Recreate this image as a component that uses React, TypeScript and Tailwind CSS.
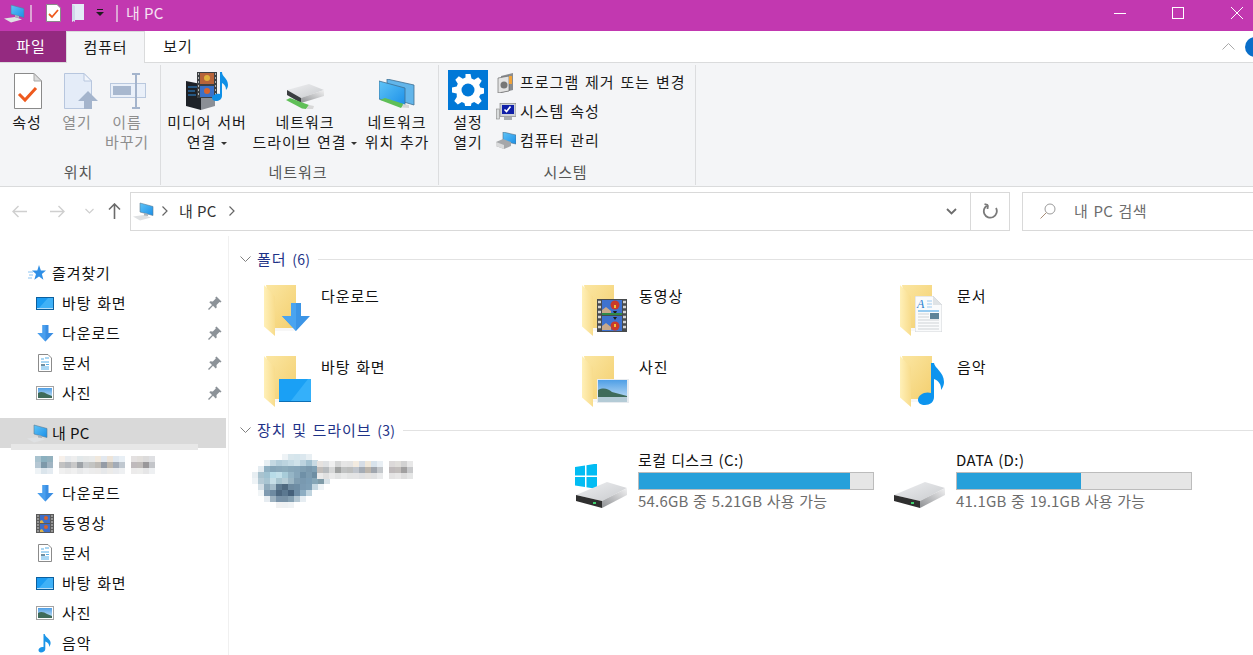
import type { ReactNode } from "react"

const FONT = "font-['Noto_Sans_CJK_KR','Noto_Sans',sans-serif]"

/* ---------- shared icons ---------- */

function Defs() {
  return (
    <svg className="absolute h-0 w-0" aria-hidden="true">
      <defs>
        <linearGradient id="folderBack" x1="0" y1="0" x2="1" y2="1">
          <stop offset="0" stopColor="#fbe6a2" />
          <stop offset="1" stopColor="#f3cf6f" />
        </linearGradient>
        <linearGradient id="folderFront" x1="0" y1="0" x2="1" y2="0">
          <stop offset="0" stopColor="#fff0b8" />
          <stop offset="1" stopColor="#f8dc8c" />
        </linearGradient>
        <linearGradient id="screen" x1="0" y1="0" x2="1" y2="1">
          <stop offset="0" stopColor="#5fc4f7" />
          <stop offset="1" stopColor="#1b8fe8" />
        </linearGradient>
        <linearGradient id="hddTop" x1="0" y1="0" x2="1" y2="1">
          <stop offset="0" stopColor="#eeeff1" />
          <stop offset="1" stopColor="#c9cbce" />
        </linearGradient>
        <linearGradient id="hddSide" x1="0" y1="1" x2="1" y2="0">
          <stop offset="0" stopColor="#8f9194" />
          <stop offset="1" stopColor="#f1f1f2" />
        </linearGradient>
        <linearGradient id="sky" x1="0" y1="0" x2="0" y2="1">
          <stop offset="0" stopColor="#4f9fe6" />
          <stop offset="1" stopColor="#cfe5f5" />
        </linearGradient>
      </defs>
    </svg>
  )
}

function PcIcon({ className = "h-[20px] w-[22px]" }: { className?: string }) {
  return (
    <svg viewBox="0 0 22 20" className={className}>
      <path d="M0 15.500l11-1.500 7 2.500-11 3z" fill="#dfe1e3" />
      <path d="M7 2l13 3.500v9L7 11z" fill="url(#screen)" stroke="#5d7c93" strokeWidth="0.6" />
      <path d="M11 12l4 1v2l-4-.5z" fill="#a9b3bb" />
    </svg>
  )
}

function DesktopIcon() {
  return (
    <svg viewBox="0 0 18 13" className="h-[13px] w-[18px]">
      <rect x="0.5" y="0.5" width="17" height="12" fill="#1b9cf2" stroke="#0b5f9e" />
      <path d="M1 11h16v1H1z" fill="#b6def8" />
      <path d="M3 11L12 1h5v10z" fill="#3fb1f7" />
    </svg>
  )
}

function DownArrowIcon() {
  return (
    <svg viewBox="0 0 17 17" className="h-[17px] w-[17px]">
      <path d="M5.5 0h6v8h5l-8 8.5L.5 8h5z" fill="#3a8ee3" />
      <path d="M5.5 0h3v16.5L.5 8h5z" fill="#4a9fee" />
    </svg>
  )
}

function DocIcon() {
  return (
    <svg viewBox="0 0 14 18" className="h-[18px] w-[14px]">
      <path d="M.5.500H10l3.500 3.500v13.500H.5z" fill="#fff" stroke="#8b8b8b" />
      <path d="M3 5h3M7 4h4M3 8h8M8 10.500h3M3 13h8M3 15h8" stroke="#55aee8" strokeWidth="1" />
      <path d="M3 10h4v2H3z" fill="#6f8ea0" />
    </svg>
  )
}

function PictureIcon() {
  return (
    <svg viewBox="0 0 18 14" className="h-[14px] w-[18px]">
      <rect x="0.5" y="0.5" width="17" height="13" fill="#fff" stroke="#a3a3a3" />
      <rect x="2" y="2" width="14" height="10" fill="url(#sky)" />
      <path d="M2 7c3-2 6-1 9 1l5 2v2H2z" fill="#3f6b5a" />
    </svg>
  )
}

function FilmIcon() {
  return (
    <svg viewBox="0 0 18 19" className="h-[19px] w-[18px]">
      <rect width="18" height="19" fill="#5a5a5a" />
      <rect x="4" y="1" width="10" height="8" fill="#3d6fc9" />
      <rect x="4" y="10" width="10" height="8" fill="#3d6fc9" />
      <circle cx="10" cy="4" r="2" fill="#d6632e" />
      <circle cx="10" cy="13" r="2" fill="#d6632e" />
      <path d="M4 7l2-1 2 3H4zM4 16l2-1 2 3H4z" fill="#e0b34a" />
      <path d="M1 2h2M1 5h2M1 8h2M1 11h2M1 14h2M1 17h2M15 2h2M15 5h2M15 8h2M15 11h2M15 14h2M15 17h2" stroke="#cfcfcf" strokeWidth="1.200" />
    </svg>
  )
}

function NoteIcon() {
  return (
    <svg viewBox="0 0 14 20" className="h-[20px] w-[14px]">
      <path d="M5.500 1h1.200c.4 3 5 4.400 5.800 8 .4 2-.4 3.500-1.300 5 .2-2.500-.8-4.500-3.900-5.500V16c0 2.200-2.200 3.500-4.300 3.500C1.400 19.500.5 18.300.5 17c0-2 2.400-3.500 5-3z" fill="#1b95e8" />
    </svg>
  )
}

function PinIcon() {
  return (
    <svg viewBox="0 0 14 14" className="h-[14px] w-[14px]">
      <path d="M8.500 0.500l5 5-1 1-1-.5-3 3 .2 2.500-1 1-2.700-2.700L1 14 0 13l4-4L1.300 6.300l1-1 2.500.2 3-3-.5-1z" fill="#8c9298" />
    </svg>
  )
}

function StarIcon() {
  return (
    <svg viewBox="0 0 18 17" className="h-[17px] w-[18px]">
      <path d="M11 0l1.900 5.500H18l-4.100 3.400 1.500 5.900L11 11.500l-4.700 3.300 1.700-5.900-4-3.400h5.300z" fill="#2f8fe6" />
      <path d="M0 7h5M1 10h4M0 13h4" stroke="#8cc4f2" strokeWidth="1" />
    </svg>
  )
}

function Pixels({ rows, size }: { rows: string[][]; size: number }) {
  const w = Math.max(...rows.map((r) => r.length)) * size
  return (
    <svg width={w} height={rows.length * size} className="block">
      {rows.map((row, y) =>
        row.map((c, x) => <rect key={`${x}-${y}`} x={x * size} y={y * size} width={size} height={size} fill={c} />),
      )}
    </svg>
  )
}

/* ---------- folders ---------- */

function Folder({ children }: { children?: ReactNode }) {
  return (
    <div className="relative h-[51px] w-[48px] shrink-0">
      <svg viewBox="0 0 32 51" className="h-[51px] w-[32px]">
        <path d="M2 0h30v43H11z" fill="url(#folderBack)" />
        <path d="M11 43h21v3H11z" fill="#f7f7f7" />
        <path d="M0 0l11 11.500V51L0 41.500z" fill="url(#folderFront)" />
      </svg>
      {children}
    </div>
  )
}

const folders: { name: string; overlay: ReactNode }[] = [
  {
    name: "다운로드",
    overlay: (
      <svg viewBox="0 0 28 29" className="absolute left-[18px] top-[18px] h-[29px] w-[28px]">
        <path d="M9 0h10v13h9L14 28 0 13h9z" fill="#3c95e6" />
        <path d="M9 0h5v28L0 13h9z" fill="#4aa4f0" />
      </svg>
    ),
  },
  {
    name: "동영상",
    overlay: (
      <svg viewBox="0 0 30 33" className="absolute left-[15px] top-[14px] h-[33px] w-[30px]">
        <rect width="30" height="33" fill="#484b4e" />
        <rect x="5" y="1" width="20" height="15" fill="#3f72cf" />
        <rect x="5" y="17" width="20" height="15" fill="#3f72cf" />
        <circle cx="18" cy="6" r="4.500" fill="#c93a2b" />
        <circle cx="18" cy="27" r="4.500" fill="#c93a2b" />
        <path d="M17 6h2v3h-2zM17 25h2v3h-2z" fill="#f0c23c" />
        <path d="M16 12h4l-2 4zM16 18h4l-2 3z" fill="#1c1c1c" />
        <path d="M5 11l4-3 5 4v3H5zM5 27l4-3 5 4v3H5z" fill="#c9a98b" />
        <path d="M5 14h20v2H5z" fill="#2f8a4a" />
        <path d="M1 3h3M1 8h3M1 13h3M1 18h3M1 23h3M1 28h3M26 3h3M26 8h3M26 13h3M26 18h3M26 23h3M26 28h3" stroke="#d4d4d4" strokeWidth="2.400" />
      </svg>
    ),
  },
  {
    name: "문서",
    overlay: (
      <svg viewBox="0 0 27 36" className="absolute left-[15px] top-[11px] h-[36px] w-[27px]">
        <path d="M0 0h18l9 9v27H0z" fill="#fafbfc" stroke="#d3d5d8" />
        <path d="M18 0l9 9h-9z" fill="#dfe3e6" />
        <path d="M12 5h5M12 8h5M12 11h5" stroke="#9ecbf0" />
        <path d="M3 15h21" stroke="#56aeea" strokeWidth="1.200" />
        <path d="M3 18h11M3 21h11M3 24h21M3 27h21M3 30h21M3 33h21" stroke="#cfd3d6" />
        <path d="M15 17h9v6h-9z" fill="#5e8499" />
        <text x="2" y="12" fontSize="12" fontStyle="italic" fontFamily="'Liberation Serif',serif" fill="#2b7fd0">A</text>
      </svg>
    ),
  },
  {
    name: "바탕 화면",
    overlay: (
      <svg viewBox="0 0 32 23" className="absolute left-[15px] top-[23px] h-[23px] w-[32px]">
        <rect width="32" height="23" fill="#1aa0f5" />
        <path d="M11 23L29 0h3v23z" fill="#34b0fa" />
        <path d="M0 22h32v1H0z" fill="#0c6fb5" />
      </svg>
    ),
  },
  {
    name: "사진",
    overlay: (
      <svg viewBox="0 0 32 24" className="absolute left-[15px] top-[23px] h-[24px] w-[32px]">
        <rect width="32" height="24" fill="#e7ebef" />
        <rect x="1" y="1" width="29" height="22" fill="url(#sky)" />
        <path d="M1 11c6-3 10-1 14 2l15 4v1H1z" fill="#3f6b5a" />
        <path d="M1 18h29v5H1z" fill="#b4cbd6" />
      </svg>
    ),
  },
  {
    name: "음악",
    overlay: (
      <svg viewBox="0 0 28 44" className="absolute left-[17px] top-[7px] h-[44px] w-[28px]">
        <path d="M14 0h3c.5 5 10 9 10 19 0 3-1 5-3 8 .5-5-2-9-7-11v18c0 5-4 8-9 8-4 0-7-2-7-5 0-5 7-9 13-7z" fill="#0d94ee" />
      </svg>
    ),
  },
]

function HddIcon({ windows }: { windows?: boolean }) {
  return (
    <svg viewBox="0 0 54 44" className="mb-[3px] h-[44px] w-[54px] shrink-0">
      {windows && (
        <path d="M0 3l10-1.500v10H0zM11.500 1.300L22-.5v12H11.500zM0 13h10v10l-10-1.500zM11.500 13H22v12l-10.500-1.800z" fill="#02bcf3" />
      )}
      <path d="M1 31l31-13 20 6-25 13z" fill="url(#hddTop)" />
      <path d="M1 31l26 6v7L1 37z" fill="#2f2f2f" />
      <path d="M27 37l25-13v7l-25 13z" fill="url(#hddSide)" />
      <rect x="18" y="38" width="3" height="2" fill="#3fd06f" />
    </svg>
  )
}

/* ---------- ribbon ---------- */

function Caret() {
  return <span className="ml-[5px] inline-block h-0 w-0 border-x-[3px] border-t-[3px] border-x-transparent border-t-[#333] align-middle" />
}

function RibbonButton({ icon, lines, width, disabled, caret }: { icon: ReactNode; lines: ReactNode[]; width: string; disabled?: boolean; caret?: boolean }) {
  return (
    <div className={`flex flex-col items-center ${width}`}>
      <div className="flex h-[40px] items-end justify-center">{icon}</div>
      <div className={`mt-[2px] text-center text-[15px] leading-[20px] tracking-[0.9px] [word-spacing:1.500px] whitespace-nowrap ${disabled ? "text-[#8e8e8e]" : "text-[#1a1a1a]"}`}>
        {lines.map((l, i) => (
          <div key={i}>
            {l}
            {caret && i === lines.length - 1 ? <Caret /> : null}
          </div>
        ))}
      </div>
    </div>
  )
}

function RibbonGroup({ label, width, children }: { label: string; width: string; children: ReactNode }) {
  return (
    <div className={`flex h-[120px] shrink-0 flex-col border-r border-[#dcdddf] ${width}`}>
      <div className="flex h-[97px] pt-[5px]">{children}</div>
      <div className="pr-[3px] text-center text-[15px] leading-[20px] tracking-[0.9px] text-[#555]">{label}</div>
    </div>
  )
}

function SmallAction({ icon, label }: { icon: ReactNode; label: string }) {
  return (
    <div className="flex h-[29px] items-center gap-[3px] text-[15px] tracking-[1px] [word-spacing:1.500px] text-[#1a1a1a] whitespace-nowrap">
      <div className="flex w-[22px] justify-center">{icon}</div>
      {label}
    </div>
  )
}

function Ribbon() {
  return (
    <div className="flex h-[124px] shrink-0 border-b border-[#dadbdc] bg-[#f4f5f7] pt-[2px]">
      <RibbonGroup label="위치" width="w-[161px]">
        <div className="w-[2px]" />
        <RibbonButton
          width="w-[50px]"
          lines={["속성"]}
          icon={
            <svg viewBox="0 0 28 36" className="mb-[1px] h-[36px] w-[28px] translate-x-[1px]">
              <path d="M.5.500H20l7.500 7.500v27.500H.5z" fill="#fff" stroke="#8a8a8a" />
              <path d="M20 .5V8h7.500z" fill="#dcdcdc" stroke="#a8a8a8" />
              <path d="M5 21l6 6 11-12" fill="none" stroke="#ee5a1e" strokeWidth="3" />
            </svg>
          }
        />
        <RibbonButton
          width="w-[50px]"
          disabled
          lines={["열기"]}
          icon={
            <svg viewBox="0 0 34 36" className="mb-[1px] h-[36px] w-[34px] translate-x-[4px]">
              <path d="M.5.500H20l7.500 7.500v27.500H.5z" fill="#e4ecf8" stroke="#b7c6de" />
              <path d="M20 .5V8h7.500z" fill="#f2f5fb" stroke="#b7c6de" />
              <path d="M24 18l10 10h-6v8H20v-8h-6z" fill="#a4b4cc" />
            </svg>
          }
        />
        <RibbonButton
          width="w-[50px]"
          disabled
          lines={["이름", "바꾸기"]}
          icon={
            <svg viewBox="0 0 36 36" className="mb-[1px] h-[36px] w-[36px] translate-x-[1px]">
              <rect x="0.5" y="10.500" width="35" height="14" fill="#eaf0f9" stroke="#b9c8de" />
              <rect x="3" y="13" width="18" height="9" fill="#a8b8cf" />
              <path d="M22 1h8M22 35h8M26 1v34" stroke="#a4b4cc" strokeWidth="2" fill="none" />
            </svg>
          }
        />
      </RibbonGroup>
      <RibbonGroup label="네트워크" width="w-[278px]">
        <div className="w-[1px]" />
        <RibbonButton
          width="w-[90px]"
          lines={["미디어 서버", "연결"]}
          caret
          icon={
            <svg viewBox="0 0 42 38" className="h-[38px] w-[42px]">
              <path d="M0 9l15 3v26L0 34z" fill="#1e2228" />
              <path d="M15 12l14-3v25l-14 4z" fill="#8b8f96" />
              <path d="M2 15h9M2 19h7M2 23h8" stroke="#2f8ad8" />
              <rect x="11" y="0" width="20" height="26" fill="#3c3f42" />
              <rect x="14" y="1" width="14" height="11" fill="#b7643a" />
              <rect x="14" y="14" width="14" height="11" fill="#3a71c8" />
              <circle cx="21" cy="6" r="3" fill="#e0b13c" />
              <circle cx="21" cy="19" r="3" fill="#d6632e" />
              <path d="M12 2h1M12 6h1M12 10h1M12 14h1M12 18h1M12 22h1M29 2h1M29 6h1M29 10h1M29 14h1M29 18h1M29 22h1" stroke="#ddd" strokeWidth="1.500" />
              <path d="M34 0h2c0 5 6 6 6 13 0 2-1 4-2 5 0-4-2-6-4-7v13c0 3-3 5-6 5-2 0-4-1-4-3 0-3 5-5 8-4z" fill="#0f8fe6" />
            </svg>
          }
        />
        <RibbonButton
          width="w-[106px]"
          lines={["네트워크", "드라이브 연결"]}
          caret
          icon={
            <svg viewBox="0 0 44 26" className="h-[26px] w-[44px]">
              <path d="M4 6L26 0l15 6-23 8z" fill="url(#hddTop)" />
              <path d="M4 6l14 8v5L4 11z" fill="#3a3d40" />
              <path d="M18 14l23-8v6l-23 7z" fill="url(#hddSide)" />
              <path d="M3 16l4-2 19 7-3 4-4-.5z" fill="#5fbf57" />
              <path d="M26 21l5 1-1 3-7 0z" fill="#d8d8d8" />
            </svg>
          }
        />
        <RibbonButton
          width="w-[78px]"
          lines={["네트워크", "위치 추가"]}
          icon={
            <svg viewBox="0 0 36 31" className="h-[31px] w-[36px]">
              <path d="M8 0l27 6v20L8 18z" fill="#62b5ea" stroke="#3f6f92" strokeWidth="0.8" />
              <path d="M0 2l26 7v18L0 20z" fill="url(#screen)" stroke="#3f6f92" strokeWidth="0.8" />
              <path d="M1 21l5-2 19 6-3 4z" fill="#5fbf57" />
              <path d="M24 25l6 1v3l-7-.5z" fill="#d5d5d5" />
            </svg>
          }
        />
      </RibbonGroup>
      <RibbonGroup label="시스템" width="w-[257px]">
        <div className="flex h-full">
          <RibbonButton
            width="w-[58px]"
            lines={["설정", "열기"]}
            icon={
              <div className="flex h-[40px] w-[40px] items-center justify-center bg-[#0078d7]">
                <svg viewBox="0 0 32 32" className="h-[32px] w-[32px]">
                  <path
                    d="M13.500 0h5l1 4.600 2.700 1.100 4-2.500 3.500 3.500-2.500 4 1.100 2.700 4.700 1v5l-4.700 1-1.100 2.700 2.500 4-3.500 3.500-4-2.500-2.700 1.100-1 4.700h-5l-1-4.700-2.700-1.100-4 2.500-3.500-3.500 2.500-4L4.700 19.400 0 18.400v-5l4.700-1 1.100-2.700-2.500-4L6.800 2.200l4 2.500 2.700-1.100z"
                    fill="#fff"
                    fillRule="evenodd"
                  />
                  <circle cx="16" cy="16" r="6.500" fill="#0078d7" />
                </svg>
              </div>
            }
          />
          <div className="ml-[-2px] mt-[-2px] flex flex-col">
            <SmallAction
              label="프로그램 제거 또는 변경"
              icon={
                <svg viewBox="0 0 18 20" className="h-[20px] w-[18px]">
                  <path d="M4 3l12-3v17l-12 3z" fill="#8a8d90" />
                  <path d="M1 5l11-2v15L1 20z" fill="#e3e3e3" stroke="#5a5a5a" strokeWidth="0.6" />
                  <circle cx="7" cy="12" r="3.500" fill="#777" />
                  <path d="M12 3h3v8h-3z" fill="#f0a33a" />
                </svg>
              }
            />
            <SmallAction
              label="시스템 속성"
              icon={
                <svg viewBox="0 0 20 18" className="h-[18px] w-[20px]">
                  <rect x="4" y="0.500" width="16" height="13" fill="#cfd3d8" stroke="#777" strokeWidth="0.6" />
                  <rect x="6" y="2" width="12" height="9" fill="#0f1fa8" />
                  <path d="M8.500 6.500l2 2 4-5" stroke="#fff" strokeWidth="1.600" fill="none" />
                  <rect x="0.500" y="6" width="3" height="10" fill="#d9dcdc" stroke="#888" strokeWidth="0.600" />
                  <rect x="8" y="14" width="8" height="3" fill="#a9adb1" />
                </svg>
              }
            />
            <SmallAction
              label="컴퓨터 관리"
              icon={
                <svg viewBox="0 0 20 17" className="h-[17px] w-[20px]">
                  <path d="M7 0l13 3v9L7 9z" fill="url(#screen)" stroke="#4d6d88" strokeWidth="0.600" />
                  <path d="M0 10l7-3 8 3v4l-7 3-8-3z" fill="#a5a7aa" />
                  <path d="M0 10l8 3v4l-8-3z" fill="#d9dadb" />
                </svg>
              }
            />
          </div>
        </div>
      </RibbonGroup>
    </div>
  )
}

/* ---------- top bars ---------- */

function TitleBar() {
  return (
    <div className="flex h-[31px] shrink-0 items-center bg-[#c238b0] pb-[5px] pl-[4px] text-white">
      <PcIcon />
      <div className="ml-[4px] h-[17px] w-[2px] bg-[#dca5d4]" />
      <svg viewBox="0 0 15 18" className="ml-[14px] h-[18px] w-[15px]">
        <path d="M.5.500H11L14.500 4v13.500H.5z" fill="#fff" stroke="#8a8a8a" />
        <path d="M3 10l3 3 6-7" fill="none" stroke="#ee5a1e" strokeWidth="1.800" />
      </svg>
      <svg viewBox="0 0 12 18" className="ml-[11px] h-[18px] w-[12px]">
        <path d="M0 0h12v16H3l-3 2z" fill="#e4ecf6" />
        <path d="M0 0l3 2v16l-3-2z" fill="#cfdbea" />
      </svg>
      <svg viewBox="0 0 8 8" className="ml-[12px] h-[8px] w-[8px]">
        <path d="M1 0h6v1H1zM0 3h8L4 7z" fill="#1d1d1d" />
      </svg>
      <div className="ml-[12px] h-[17px] w-[2px] bg-[#dca5d4]" />
      <span className="ml-[8px] text-[15px] tracking-[0.4px] text-[#f6e3f3]">내 PC</span>
      <div className="ml-auto flex items-center pr-[10px]">
        <div className="mr-[46px] h-px w-[12px] bg-white" />
        <div className="mr-[47px] h-[12px] w-[12px] border border-white" />
        <svg viewBox="0 0 12 12" className="h-[12px] w-[12px]">
          <path d="M0 0l12 12M12 0L0 12" stroke="#fff" strokeWidth="1" />
        </svg>
      </div>
    </div>
  )
}

function Tabs() {
  return (
    <div className="flex h-[32px] shrink-0 items-stretch border-b border-[#dadbdc] bg-white text-[15px] tracking-[0.9px]">
      <div className="flex w-[66px] items-center justify-center bg-[#942a80] pr-[4px] text-white">파일</div>
      <div className="relative mb-[-1px] flex w-[79px] items-center justify-center border-x border-t border-[#dadbdc] bg-[#f4f5f7] text-[#1a1a1a]">컴퓨터</div>
      <div className="flex w-[66px] items-center justify-center text-[#1a1a1a]">보기</div>
      <div className="ml-auto flex items-center gap-[10px] overflow-hidden">
        <svg viewBox="0 0 13 7" className="h-[7px] w-[13px]">
          <path d="M.5 6.500l6-6 6 6" fill="none" stroke="#a9a9a9" />
        </svg>
        <div className="mr-[-12px] flex h-[20px] w-[20px] items-start justify-center rounded-full bg-[#0a6ec9] pt-[3px]">
          <div className="h-[3px] w-[2px] bg-white" />
        </div>
      </div>
    </div>
  )
}

function AddressBar() {
  return (
    <div className="flex h-[49px] shrink-0 items-center pb-[1px] pl-[12px]">
      <svg viewBox="0 0 15 13" className="h-[13px] w-[15px]">
        <path d="M15 6.500H1M6.500 1L1 6.500 6.500 12" fill="none" stroke="#cfcfcf" strokeWidth="1.400" />
      </svg>
      <svg viewBox="0 0 15 13" className="ml-[23px] h-[13px] w-[15px]">
        <path d="M0 6.500h14M8.500 1L14 6.500 8.500 12" fill="none" stroke="#cfcfcf" strokeWidth="1.400" />
      </svg>
      <svg viewBox="0 0 9 6" className="ml-[20px] h-[6px] w-[9px]">
        <path d="M.5 1l4 4 4-4" fill="none" stroke="#cfcfcf" strokeWidth="1.200" />
      </svg>
      <svg viewBox="0 0 13 16" className="ml-[14px] h-[16px] w-[13px]">
        <path d="M6.500 16V1M1 6.500L6.500 1 12 6.500" fill="none" stroke="#6b6b6b" strokeWidth="1.600" />
      </svg>
      <div className="ml-[9px] flex h-[39px] w-[880px] items-center border border-[#d9d9d9]">
        <div className="ml-[2px] flex w-[838px] items-center">
          <PcIcon />
          <svg viewBox="0 0 6 10" className="ml-[7px] h-[10px] w-[6px]">
            <path d="M.5.500l4.500 4.500L.5 9.500" fill="none" stroke="#666" strokeWidth="1.200" />
          </svg>
          <span className="ml-[11px] text-[15px] tracking-[0.4px] text-[#333]">내 PC</span>
          <svg viewBox="0 0 6 10" className="ml-[12px] h-[10px] w-[6px]">
            <path d="M.5.500l4.500 4.500L.5 9.500" fill="none" stroke="#666" strokeWidth="1.200" />
          </svg>
          <svg viewBox="0 0 11 7" className="ml-auto mr-[13px] h-[7px] w-[11px]">
            <path d="M1 1l4.500 4.500L10 1" fill="none" stroke="#6d6d6d" strokeWidth="1.800" />
          </svg>
        </div>
        <div className="flex h-full w-[39px] items-center justify-center border-l border-[#d9d9d9]">
          <svg viewBox="0 0 16 16" className="h-[16px] w-[16px]">
            <path d="M6 2.100A6.500 6.500 0 1 0 14 5M6 2.100L5.500 6M6 2.100L2.500 1" fill="none" stroke="#7a7a7a" strokeWidth="1.800" />
          </svg>
        </div>
      </div>
      <div className="ml-[12px] flex h-[39px] flex-1 items-center border border-[#d9d9d9] border-r-0 pl-[17px]">
        <svg viewBox="0 0 16 16" className="h-[16px] w-[16px]">
          <circle cx="10" cy="6" r="5" fill="none" stroke="#9b9b9b" />
          <path d="M6.400 9.600L.5 15.500" stroke="#a88d76" />
        </svg>
        <span className="ml-[18px] text-[15px] tracking-[0.4px] [word-spacing:1.500px] text-[#6d6d6d]">내 PC 검색</span>
      </div>
    </div>
  )
}

/* ---------- sidebar ---------- */

const quick = [
  { icon: <DesktopIcon />, label: "바탕 화면" },
  { icon: <DownArrowIcon />, label: "다운로드" },
  { icon: <DocIcon />, label: "문서" },
  { icon: <PictureIcon />, label: "사진" },
]

const pcItems = [
  { icon: <DownArrowIcon />, label: "다운로드" },
  { icon: <FilmIcon />, label: "동영상" },
  { icon: <DocIcon />, label: "문서" },
  { icon: <DesktopIcon />, label: "바탕 화면" },
  { icon: <PictureIcon />, label: "사진" },
  { icon: <NoteIcon />, label: "음악" },
]

function NavRow({ icon, label, pinned }: { icon: ReactNode; label: string; pinned?: boolean }) {
  return (
    <div className="flex h-[30px] items-center pl-[36px] pr-[4px] text-[15px] tracking-[0.9px] [word-spacing:1.500px] text-[#111]">
      <div className="flex w-[18px] justify-center">{icon}</div>
      <span className="ml-[8px]">{label}</span>
      {pinned && (
        <div className="ml-auto">
          <PinIcon />
        </div>
      )}
    </div>
  )
}

const sideBlur: string[][] = [
  ["#a9c3cf", "#8bb0bf", "#93b1be", "#fff", "#f7f0ea", "#e8ebee", "#eeeeee", "#e2e8ea", "#e6e8e8", "#e8eaea", "#f0e8dd", "#e2e8ef", "#ede4d9", "#e0e8f0", "#e8eff5", "#fff", "#e4e1e1", "#e2dfdc", "#dcdbdb", "#dfe0e3"],
  ["#b5c7d3", "#7d99aa", "#a0b4c2", "#fff", "#c2c2c2", "#b6b9bd", "#c9c9c9", "#9ea3a8", "#c6c9cb", "#c3c4c2", "#bdbab5", "#959ca6", "#bdb7ae", "#a3acb8", "#c0c8d0", "#fff", "#bfbabc", "#c0bcba", "#9a989a", "#c3c5c9"],
  ["#eef3f6", "#dbe5ec", "#e4ebf1", "#fff", "#f0f0f0", "#ececec", "#f0f0f0", "#e8e9ea", "#eeeff0", "#ececec", "#ecebea", "#e6e8ea", "#ecebe9", "#e9ebee", "#eef0f2", "#fff", "#ecebeb", "#ededec", "#e6e6e7", "#eef0f2"],
]

function Sidebar() {
  return (
    <aside className="relative w-[229px] shrink-0 border-r border-[#f0f0f0] pr-[2px] pt-[22px]">
      <div className="flex h-[30px] items-center pl-[28px] text-[15px] tracking-[0.9px] text-[#111]">
        <StarIcon />
        <span className="ml-[6px]">즐겨찾기</span>
      </div>
      {quick.map((q) => (
        <NavRow key={q.label} icon={q.icon} label={q.label} pinned />
      ))}
      <div className="mt-[10px] flex h-[30px] items-center bg-[#d9d9d9] pl-[27px] text-[15px] tracking-[0.4px] text-[#111]">
        <PcIcon />
        <span className="ml-[3px]">내 PC</span>
      </div>
      {/* masked part of the tree */}
      <div className="absolute left-[11px] top-[208px] h-[6px] w-[187px] bg-[#e7e7e7]" />
      <div className="flex h-[30px] items-center pl-[35px] pt-[4px]">
        <Pixels rows={sideBlur} size={6} />
      </div>
      {pcItems.map((q) => (
        <NavRow key={q.label} icon={q.icon} label={q.label} />
      ))}
    </aside>
  )
}

/* ---------- content ---------- */

function SectionHeader({ label, count }: { label: string; count: number }) {
  return (
    <div className="mt-[14px] flex h-[18px] items-center pl-[11px]">
      <svg viewBox="0 0 11 6" className="h-[6px] w-[11px] shrink-0">
        <path d="M.5.500l5 5 5-5" fill="none" stroke="#7f7f7f" />
      </svg>
      <span className="ml-[6px] whitespace-nowrap text-[15px] tracking-[0.9px] [word-spacing:1.500px] text-[#1e3287]">
        {label} <span className="text-[14px] tracking-[0.3px]">({count})</span>
      </span>
      <div className="ml-[8px] h-px flex-1 bg-[#e2e2e2]" />
    </div>
  )
}

function DriveCell({ name, info, used, windows }: { name: string; info: string; used: string; windows?: boolean }) {
  return (
    <div className="flex items-end pl-[11px]">
      <HddIcon windows={windows} />
      <div className="ml-[9px] w-[236px]">
        <div className="text-[15px] leading-[20px] tracking-[0.4px] [word-spacing:1px] text-[#111]">{name}</div>
        <div className="mt-[2px] h-[18px] border border-[#bcbcbc] bg-[#e6e6e6]">
          <div className={`h-full bg-[#26a0da] ${used}`} />
        </div>
        <div className="mt-[1px] text-[15px] leading-[20px] tracking-[0.2px] [word-spacing:1px] text-[#6d6d6d] whitespace-nowrap">{info}</div>
      </div>
    </div>
  )
}

const driveBlur: string[][] = [
  ["#fff", "#fff", "#fff", "#fff", "#fff", "#eef3f6", "#d8e6ec", "#d5e5ec", "#dbe7ee", "#e8eff3", "#fff", "#fff", "#fff"],
  ["#fff", "#fff", "#e7eff3", "#c5d9e3", "#b4cedb", "#bcd4df", "#c5dbe5", "#cfe2ea", "#bcd3df", "#a2c1d1", "#c8dae3", "#fff", "#fff"],
  ["#fff", "#e4ecf1", "#8fb0c2", "#86a6b9", "#8aa9bb", "#8cacbc", "#87a7b9", "#85a5b9", "#7f9fb3", "#7a99ae", "#7fa0b4", "#cfdce4", "#fff"],
  ["#e7eef2", "#a9c3cf", "#9fc2d1", "#b8dce8", "#c2e0ea", "#a8ccd9", "#95b5c6", "#86a6ba", "#6f90a7", "#7c9cb1", "#6e8ea3", "#5c7c90", "#e6edf1"],
  ["#eef3f6", "#b5cbd6", "#a8c5d2", "#c7dfe7", "#a9c6d1", "#b6cdd7", "#9cb7c5", "#7f9db1", "#7999b0", "#7b9db5", "#86a6b7", "#7f9ba8", "#d8e2e8"],
  ["#fff", "#d3dfe6", "#8fabbc", "#a5bdca", "#5e7a90", "#4f6a80", "#6d8aa0", "#6e8da4", "#7b9bb3", "#7e9fb6", "#c6d8e2", "#eef3f6", "#fff"],
  ["#fff", "#f1f5f7", "#7f9ab0", "#6e8aa1", "#4d6880", "#5b7890", "#45607a", "#6d8ca5", "#8dadc2", "#c0d4df", "#fff", "#fff", "#fff"],
  ["#fff", "#fff", "#e6ecf1", "#9fb3c1", "#7892a8", "#7892a6", "#85a0b2", "#b4c7d3", "#e6edf2", "#fff", "#fff", "#fff", "#fff"],
  ["#fff", "#fff", "#fff", "#fff", "#f0f1f2", "#eef1f3", "#f0f3f5", "#fff", "#fff", "#fff", "#fff", "#fff", "#fff"],
]

const driveTextBlur: string[][] = [
  ["#e6e2df", "#dfe1e3", "#f0f0f0", "#d5d6d6", "#e6e6e6", "#e4e4e4", "#f3ebe0", "#d6dde6", "#f0e7d9", "#d8e3ec", "#e9eff4", "#fff", "#dcd9d9", "#e0dedb", "#d2d2d2", "#e8e8e8"],
  ["#c2bebb", "#b7bbbe", "#d6d7d7", "#a0a2a1", "#c0c2c2", "#bdbebd", "#c0c5cc", "#a5acb5", "#bdb6ad", "#a0a6ae", "#c4c8cc", "#fff", "#bfbabb", "#c2bebc", "#a1a0a0", "#c8c9cb"],
  ["#eaeaea", "#e0e0e0", "#eaeaea", "#e2e3e3", "#e8e9e9", "#e3e4e4", "#e4e4e5", "#dfe0e2", "#e4e2e0", "#e0e1e2", "#eaebec", "#fff", "#e4e3e3", "#e8e7e7", "#dddddd", "#e5e6e6"],
]

function Content() {
  return (
    <main className="min-w-0 flex-1">
      <SectionHeader label="폴더" count={6} />
      <div className="mt-[17px] grid grid-cols-[318px_318px_318px] gap-y-[20px] pl-[17px]">
        {folders.map((f) => (
          <div key={f.name} className="flex h-[51px] pl-[18px]">
            <Folder>{f.overlay}</Folder>
            <span className="ml-[9px] mt-px text-[15px] leading-[20px] tracking-[0.9px] [word-spacing:1.500px] text-[#111]">{f.name}</span>
          </div>
        ))}
      </div>
      <SectionHeader label="장치 및 드라이브" count={3} />
      <div className="mt-[11px] grid grid-cols-[318px_318px_318px] pl-[17px]">
        <div className="flex items-start pl-[6px] pt-[4px]">
          <Pixels rows={driveBlur} size={6} />
          <div className="ml-[-13px] mt-[7px]">
            <Pixels rows={driveTextBlur} size={6} />
          </div>
        </div>
        <DriveCell name="로컬 디스크 (C:)" info="54.6GB 중 5.21GB 사용 가능" used="w-[90%]" windows />
        <DriveCell name="DATA (D:)" info="41.1GB 중 19.1GB 사용 가능" used="w-[53%]" />
      </div>
    </main>
  )
}

export default function App() {
  return (
    <div className={`flex h-[655px] w-[1253px] flex-col overflow-hidden bg-white ${FONT}`}>
      <Defs />
      <TitleBar />
      <Tabs />
      <Ribbon />
      <AddressBar />
      <div className="flex min-h-0 flex-1">
        <Sidebar />
        <Content />
      </div>
    </div>
  )
}
